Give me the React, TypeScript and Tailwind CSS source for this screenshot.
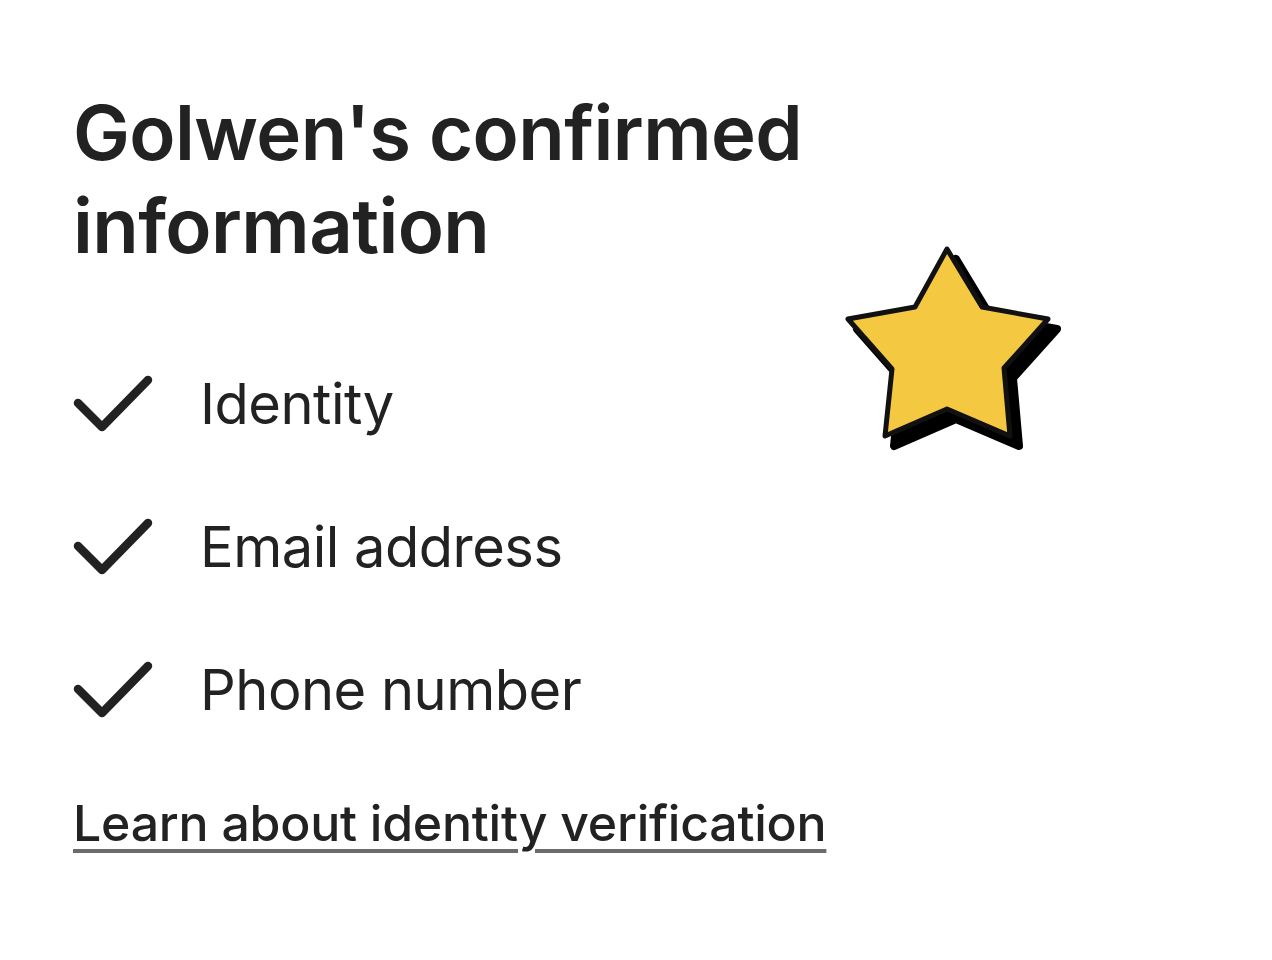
import React from 'react';

const items = ['Identity', 'Email address', 'Phone number'];

function Check() {
  return (
    <svg width="80" height="60" viewBox="0 0 80 60" className="shrink-0">
      <path
        d="M5 29 L29 53 L75 6"
        fill="none"
        stroke="#222222"
        strokeWidth="8.5"
        strokeLinecap="round"
        strokeLinejoin="round"
      />
    </svg>
  );
}

function Star() {
  const pts = '108,9 143,67 209,79 165,128 171,196 108,169 46,196 53,129 9,79 76,67';
  return (
    <svg width="230" height="220" viewBox="0 0 230 220">
      <polygon points={pts} transform="translate(9 10)" fill="#000" stroke="#000" strokeWidth="8" strokeLinejoin="round" />
      <polygon points={pts} fill="#F5C842" stroke="#111" strokeWidth="5" strokeLinejoin="round" />
    </svg>
  );
}

export default function App() {
  return (
    <div className="w-[1272px] h-[960px] bg-white flex font-['Inter',sans-serif] text-[#222222]">
      <div className="flex flex-col pl-[73px] pt-[86px]">
        <h1 className="text-[76px] leading-[93px] font-semibold tracking-[-0.6px] w-[760px]">
          Golwen's confirmed information
        </h1>
        <ul className="mt-[102px] flex flex-col gap-[83px]">
          {items.map((t) => (
            <li key={t} className="flex items-center gap-[47px] h-[60px]">
              <Check />
              <span className="text-[56px] leading-[60px] tracking-[-0.5px]">{t}</span>
            </li>
          ))}
        </ul>
        <a href="#" className="mt-[73px] text-[50px] leading-[60px] font-medium underline decoration-[4px] decoration-[#6b6b6b] underline-offset-[8px] tracking-[-0.25px]">
          Learn about identity verification
        </a>
      </div>
      <div className="pt-[240px] pl-[6px]">
        <Star />
      </div>
    </div>
  );
}
